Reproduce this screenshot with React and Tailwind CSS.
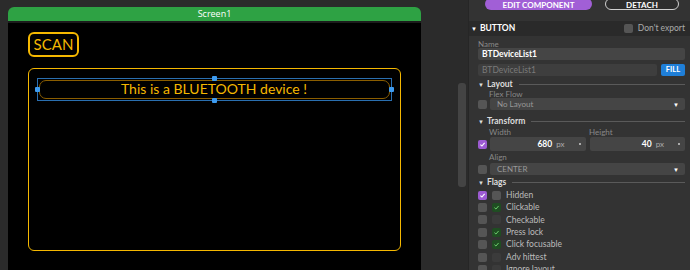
import React from "react";

const PANEL_FONT = { fontFamily: "Lato, 'Open Sans', sans-serif" };

function Box({ kind = "off" }) {
  if (kind === "purple") {
    return (
      <span className="flex h-[9px] w-[9px] items-center justify-center rounded-[2px] bg-[#9d5bd2]">
        <svg viewBox="0 0 10 10" className="h-[7px] w-[7px]">
          <path d="M2 5.2 L4.2 7.2 L8 2.8" fill="none" stroke="white" strokeWidth="1.6" />
        </svg>
      </span>
    );
  }
  if (kind === "green") {
    return (
      <span className="flex h-[9px] w-[9px] items-center justify-center rounded-[2px] bg-[#1f4d22]">
        <svg viewBox="0 0 10 10" className="h-[7px] w-[7px]">
          <path d="M2 5.2 L4.2 7.2 L8 2.8" fill="none" stroke="#6fd36f" strokeWidth="1.4" />
        </svg>
      </span>
    );
  }
  if (kind === "dark") return <span className="h-[9px] w-[9px] rounded-[2px] bg-[#3b3b3b]" />;
  return <span className="h-[9px] w-[9px] rounded-[2px] bg-[#555555]" />;
}

function SectionHead({ label, className = "" }) {
  return (
    <div className={`ml-[9px] mr-[5px] flex h-[9px] items-center gap-[3px] ${className}`}>
      <span className="text-[6px] leading-none text-[#ddd]">▼</span>
      <span className="text-[8.5px] font-bold leading-none text-[#ddd]">{label}</span>
      <span className="ml-[3px] h-px flex-1 bg-[#5a5a5a]" />
    </div>
  );
}

function Select({ value }) {
  return (
    <div className="flex h-full flex-1 items-center justify-between rounded-[2px] bg-[#454545] pl-[7px] pr-[6px]">
      <span className="text-[8px] text-[#999]">{value}</span>
      <span className="text-[6px] text-white">▼</span>
    </div>
  );
}

function NumField({ value }) {
  return (
    <div className="flex h-full flex-1 items-center rounded-[2px] bg-[#454545] pr-[5px]">
      <span className="flex-1 text-right text-[8.5px] font-bold text-white">{value}</span>
      <span className="ml-[4px] text-[8px] text-[#aaa]">px</span>
      <span className="ml-[14px] h-[2px] w-[2px] rounded-full bg-[#ccc]" />
    </div>
  );
}

const flags = [
  ["Hidden", "purple", "off"],
  ["Clickable", "off", "green"],
  ["Checkable", "off", "dark"],
  ["Press lock", "off", "green"],
  ["Click focusable", "off", "green"],
  ["Adv hittest", "off", "dark"],
  ["Ignore layout", "off", "dark"],
];

function Handle({ className }) {
  return <span className={`absolute h-[5px] w-[5px] rounded-[1px] bg-[#3d9bf0] ${className}`} />;
}

export default function App() {
  return (
    <div className="flex h-[270px] w-[690px] overflow-hidden bg-[#2b2b2b]">
      {/* canvas area */}
      <div className="flex w-[468px] shrink-0">
        <div className="ml-[8px] mt-[7px] flex w-[413px] flex-col">
          <div
            className="flex h-[14px] shrink-0 items-center justify-center rounded-t-[6px] bg-[#2ea244] text-[9px] text-white"
            style={{ fontFamily: "'Open Sans', sans-serif" }}
          >
            Screen1
          </div>
          <div className="h-[2px] shrink-0 bg-[#1c1c1c]" />
          <div
            className="flex flex-1 flex-col bg-black pl-[20px]"
            style={{ fontFamily: "Lato, 'Open Sans', sans-serif" }}
          >
            <div className="mt-[9px] flex h-[25px] w-[51px] shrink-0 items-center justify-center rounded-[6px] border-2 border-[#f5b800] text-[15px] text-[#f5b800]">
              SCAN
            </div>
            <div className="mt-[11px] h-[183px] w-[373px] shrink-0 rounded-[6px] border-[1.5px] border-[#f5b800] pl-[7.5px] pt-[8.5px]">
              <div className="relative h-[23px] w-[355px] border border-[#2a6fb0] p-px">
                <div className="flex h-full items-center justify-center rounded-[7px] border border-[#8a5d00] text-[14px] leading-none text-[#f5b800]">
                  This is a BLUETOOTH device !
                </div>
                <Handle className="left-[-3px] top-[8px]" />
                <Handle className="right-[-3px] top-[8px]" />
                <Handle className="left-[174px] top-[-3px]" />
                <Handle className="bottom-[-3px] left-[174px]" />
              </div>
            </div>
          </div>
        </div>
        <div className="ml-auto mr-[2px] mt-[83px] h-[104px] w-[8px] rounded-[3px] bg-[#444444]" />
      </div>

      {/* inspector panel */}
      <div
        className="flex w-[222px] shrink-0 flex-col border-l border-[#262626] bg-[#333333] *:shrink-0"
        style={PANEL_FONT}
      >
        <div className="flex h-[21px] items-start">
          <div className="-mt-[2px] ml-[16px] flex h-[12px] w-[107px] items-center justify-center rounded-full bg-[#a15fd6] pt-[2px] text-[8px] font-bold leading-none text-white">
            EDIT COMPONENT
          </div>
          <div className="-mt-[2px] ml-[13px] flex h-[12px] w-[74px] items-center justify-center rounded-full border border-[#cfcfcf] bg-[#2d2d2d] pt-[2px] text-[8px] font-bold leading-none text-white">
            DETACH
          </div>
        </div>

        <div className="flex h-[15px] items-center bg-[#2a2a2a] pl-[2px] pr-[5px]">
          <span className="text-[6px] text-white">▼</span>
          <span className="ml-[3px] text-[8.5px] font-bold text-white">BUTTON</span>
          <span className="ml-auto h-[9px] w-[9px] rounded-[2px] bg-[#555]" />
          <span className="ml-[5px] text-[8.5px] text-[#aaa]">Don't export</span>
        </div>

        <div className="ml-[9px] mt-[4px] h-[8px] text-[8px] leading-[8px] text-[#888]">Name</div>
        <div className="ml-[9px] mr-[5px] flex h-[12px] items-center rounded-[2px] bg-[#454545] pl-[4px] text-[8.5px] font-bold text-white">
          BTDeviceList1
        </div>

        <div className="ml-[9px] mr-[5px] mt-[4px] flex h-[12px] gap-[4px]">
          <div className="flex flex-1 items-center rounded-[2px] bg-[#3e3e3e] pl-[4px] text-[8.5px] text-[#7a7a7a]">
            BTDeviceList1
          </div>
          <div className="flex w-[24px] items-center justify-center rounded-[2px] bg-[#1f7fd8] text-[7.5px] font-bold text-white">
            FILL
          </div>
        </div>

        <SectionHead label="Layout" className="mt-[4px]" />
        <div className="ml-[20px] mt-[1px] h-[8px] text-[8px] leading-[8px] text-[#888]">Flex Flow</div>
        <div className="ml-[9px] mr-[5px] flex h-[12px] items-center gap-[3px]">
          <Box />
          <Select value="No Layout" />
        </div>

        <SectionHead label="Transform" className="mt-[7px]" />
        <div className="ml-[20px] mr-[5px] mt-[2px] flex h-[9px] text-[8px] leading-[9px] text-[#888]">
          <span className="w-[100px]">Width</span>
          <span>Height</span>
        </div>
        <div className="ml-[9px] mr-[5px] flex h-[14px] items-center gap-[3px]">
          <Box kind="purple" />
          <div className="flex h-full flex-1 gap-[4px]">
            <NumField value="680" />
            <NumField value="40" />
          </div>
        </div>
        <div className="ml-[20px] mt-[2px] h-[9px] text-[8px] leading-[9px] text-[#888]">Align</div>
        <div className="ml-[9px] mr-[5px] mt-[1px] flex h-[12px] items-center gap-[3px]">
          <Box />
          <Select value="CENTER" />
        </div>

        <SectionHead label="Flags" className="mt-[3px]" />
        <div className="mt-[2px] flex flex-col">
          {flags.map(([label, outer, inner]) => (
            <div key={label} className="ml-[9px] flex h-[12.4px] shrink-0 items-center gap-[5px]">
              <Box kind={outer} />
              <Box kind={inner} />
              <span className="text-[8.5px] text-[#bbb]">{label}</span>
            </div>
          ))}
        </div>
      </div>
    </div>
  );
}
